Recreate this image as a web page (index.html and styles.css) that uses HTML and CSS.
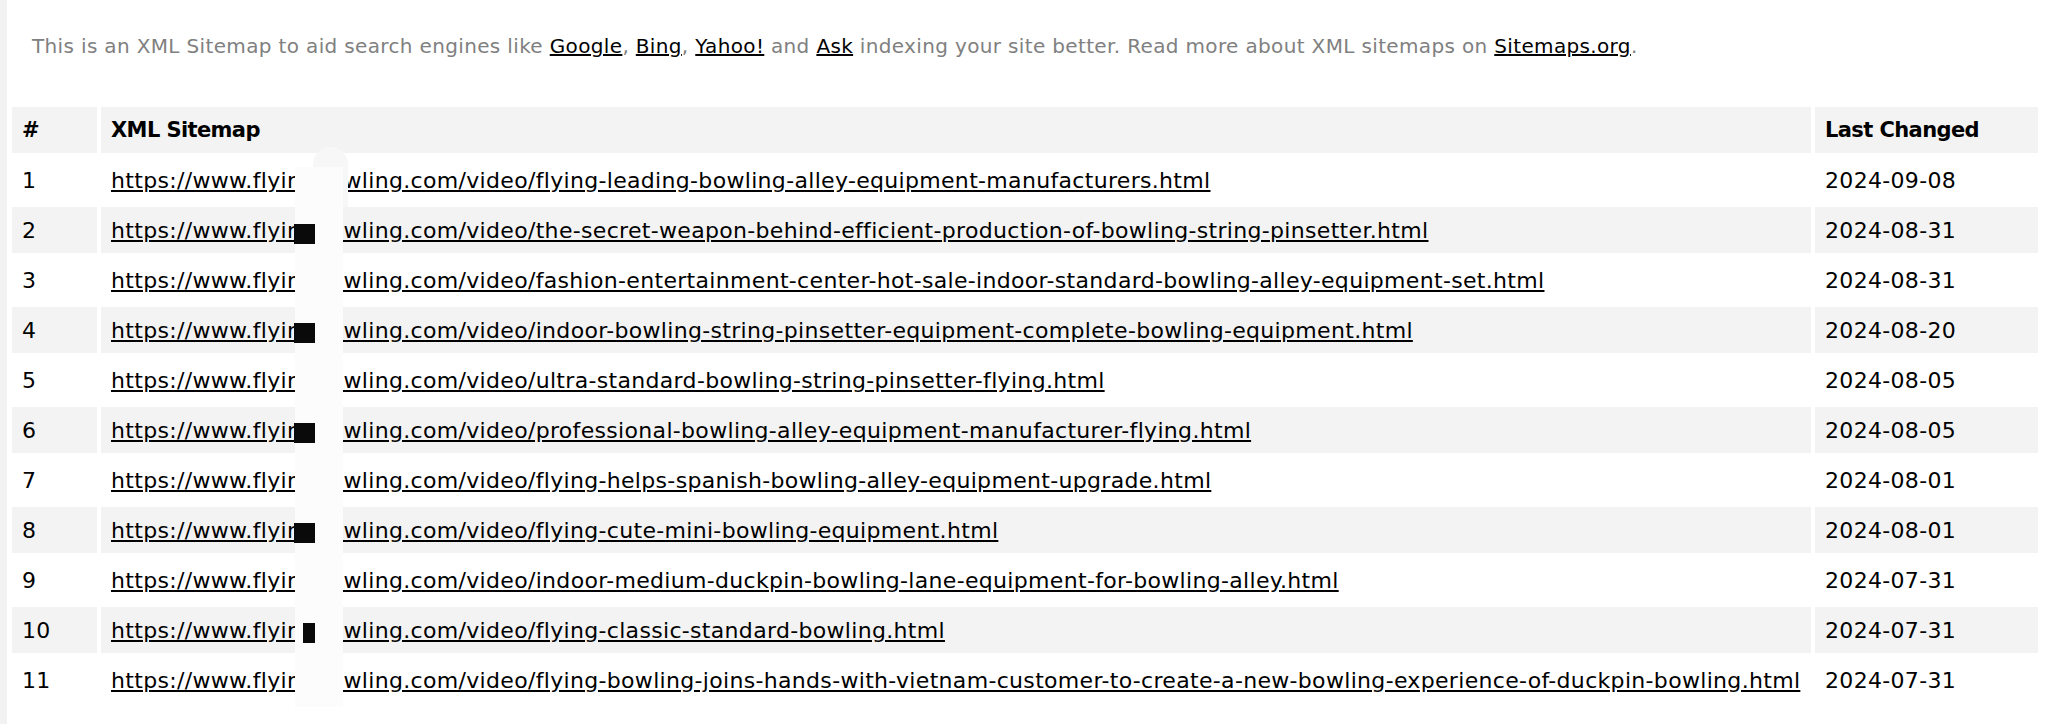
FILE: index.html
```html
<!DOCTYPE html>
<html lang="en">
<head>
<meta charset="utf-8">
<title>XML Sitemap</title>
<link rel="stylesheet" href="styles.css">
</head>
<body>
<div class="page">
  <p class="intro">This is an XML Sitemap to aid search engines like <a href="#">Google</a>, <a href="#">Bing</a>, <a href="#">Yahoo!</a> and <a href="#">Ask</a> indexing your site better. Read more about XML sitemaps on <a href="#">Sitemaps.org</a>.</p>
  <div class="table-wrap">
    <table class="sitemap">
      <colgroup>
        <col class="c-num">
        <col class="c-url">
        <col class="c-date">
      </colgroup>
      <thead>
        <tr><th>#</th><th>XML Sitemap</th><th>Last Changed</th></tr>
      </thead>
      <tbody>
        <tr><td>1</td><td><a href="#">https://www.flyingbowling.com/video/flying-leading-bowling-alley-equipment-manufacturers.html</a></td><td>2024-09-08</td></tr>
        <tr><td>2</td><td><a href="#">https://www.flyingbowling.com/video/the-secret-weapon-behind-efficient-production-of-bowling-string-pinsetter.html</a></td><td>2024-08-31</td></tr>
        <tr><td>3</td><td><a href="#">https://www.flyingbowling.com/video/fashion-entertainment-center-hot-sale-indoor-standard-bowling-alley-equipment-set.html</a></td><td>2024-08-31</td></tr>
        <tr><td>4</td><td><a href="#">https://www.flyingbowling.com/video/indoor-bowling-string-pinsetter-equipment-complete-bowling-equipment.html</a></td><td>2024-08-20</td></tr>
        <tr><td>5</td><td><a href="#">https://www.flyingbowling.com/video/ultra-standard-bowling-string-pinsetter-flying.html</a></td><td>2024-08-05</td></tr>
        <tr><td>6</td><td><a href="#">https://www.flyingbowling.com/video/professional-bowling-alley-equipment-manufacturer-flying.html</a></td><td>2024-08-05</td></tr>
        <tr><td>7</td><td><a href="#">https://www.flyingbowling.com/video/flying-helps-spanish-bowling-alley-equipment-upgrade.html</a></td><td>2024-08-01</td></tr>
        <tr><td>8</td><td><a href="#">https://www.flyingbowling.com/video/flying-cute-mini-bowling-equipment.html</a></td><td>2024-08-01</td></tr>
        <tr><td>9</td><td><a href="#">https://www.flyingbowling.com/video/indoor-medium-duckpin-bowling-lane-equipment-for-bowling-alley.html</a></td><td>2024-07-31</td></tr>
        <tr><td>10</td><td><a href="#">https://www.flyingbowling.com/video/flying-classic-standard-bowling.html</a></td><td>2024-07-31</td></tr>
        <tr><td>11</td><td><a href="#">https://www.flyingbowling.com/video/flying-bowling-joins-hands-with-vietnam-customer-to-create-a-new-bowling-experience-of-duckpin-bowling.html</a></td><td>2024-07-31</td></tr>
      </tbody>
    </table>
    <div class="redact">
      <div class="redact-head"></div>
      <div class="redact-body"></div>
      <div class="mark m2"></div>
      <div class="mark m4"></div>
      <div class="mark m6"></div>
      <div class="mark m8"></div>
      <div class="mark m10"></div>
    </div>
  </div>
</div>
</body>
</html>
```
FILE: styles.css
```css
html, body {
  margin: 0;
  padding: 0;
}
body {
  background: linear-gradient(to right, #f2f2f2 0, #f2f2f2 7px, #ffffff 7px);
  font-family: "DejaVu Sans", "Liberation Sans", sans-serif;
  color: #000;
}
.page {
  padding: 34px 4px 0 8px;
}
.intro {
  margin: 0 0 45px;
  padding-left: 24px;
  font-size: 20px;
  line-height: 24px;
  letter-spacing: 0.35px;
  color: #808080;
}
.intro a {
  color: #000;
  text-decoration: underline;
}
.table-wrap {
  position: relative;
  width: 2034px;
}
.sitemap {
  width: 2034px;
  table-layout: fixed;
  border-collapse: separate;
  border-spacing: 4px;
  font-size: 22px;
  letter-spacing: 0.32px;
}
.c-num { width: 85px; }
.c-url { width: 1710px; }
.c-date { width: 223px; }
.sitemap th,
.sitemap td {
  height: 46px;
  padding: 0 10px;
  text-align: left;
  vertical-align: middle;
  white-space: nowrap;
  box-sizing: border-box;
}
.sitemap th {
  font-size: 21px;
  letter-spacing: -0.6px;
  font-weight: bold;
  background: #f3f3f3;
}
.sitemap tbody tr:nth-child(even) td {
  background: #f3f3f3;
}
.sitemap a {
  color: #000;
  text-decoration: underline;
}
.redact {
  position: absolute;
  left: 0;
  top: 0;
  width: 0;
  height: 0;
}
.redact-head {
  position: absolute;
  left: 305px;
  top: 44px;
  width: 35px;
  height: 60px;
  border-radius: 18px 18px 0 0;
  background: #f7f7f7;
}
.redact-body {
  position: absolute;
  left: 287px;
  top: 64px;
  width: 48px;
  height: 546px;
  background: #fcfcfc;
}
.mark {
  position: absolute;
  left: 286px;
  width: 21px;
  height: 20px;
  background: #0a0a0a;
}
.m2 { top: 121px; }
.m4 { top: 220px; }
.m6 { top: 320px; }
.m8 { top: 420px; }
.m10 { top: 520px; left: 295px; width: 12px; }
```
